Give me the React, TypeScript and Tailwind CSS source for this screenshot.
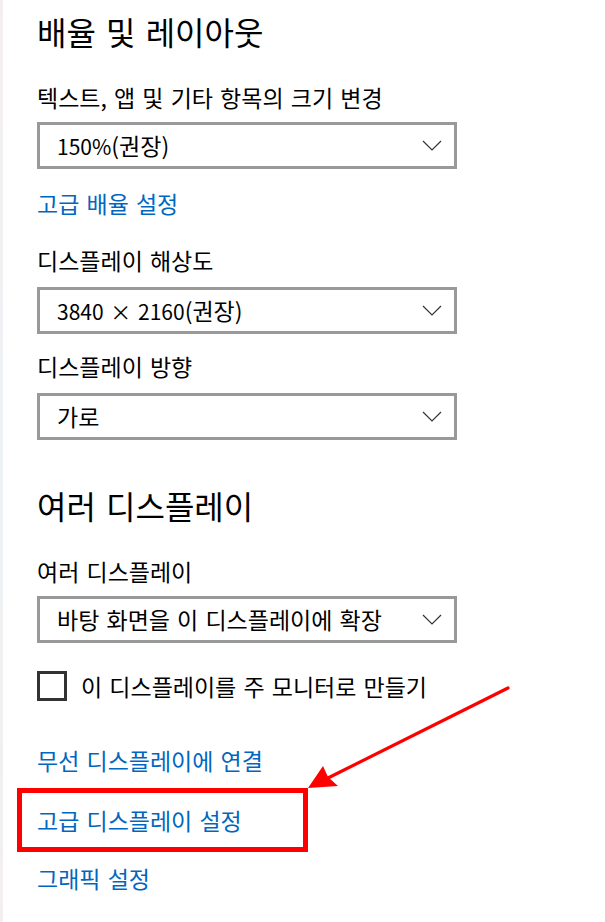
import { ReactNode } from 'react'

const font = { fontFamily: '"Noto Sans CJK KR", "Noto Sans", sans-serif' }

function Dropdown({ children, className = '' }: { children: ReactNode; className?: string }) {
  return (
    <div
      className={`w-[420px] h-[47px] border-[3px] border-[#999999] bg-white flex items-center justify-between pl-[17px] pr-[12px] ${className}`}
    >
      <span className="text-[23px] text-black leading-none [word-spacing:2px]">{children}</span>
      <svg width="20" height="11" viewBox="0 0 20 11" fill="none">
        <path d="M1 1 L10 10 L19 1" stroke="#333333" strokeWidth="1.2" />
      </svg>
    </div>
  )
}

function Label({ children, className = '' }: { children: ReactNode; className?: string }) {
  return (
    <div className={`h-[46px] flex items-center text-[23px] text-black [word-spacing:2px] ${className}`}>
      {children}
    </div>
  )
}

function Link({ children, className = '' }: { children: ReactNode; className?: string }) {
  return (
    <div className={`h-[40px] flex items-center text-[23px] text-[#0067c0] [word-spacing:2px] ${className}`}>
      {children}
    </div>
  )
}

export default function App() {
  return (
    <div className="relative w-[605px] h-[922px] bg-white flex overflow-hidden" style={font}>
      <div className="w-[3px] h-full bg-gradient-to-b from-[#f5eef0] via-[#edf2f5] to-[#f3efee]" />

      <div className="flex flex-col pl-[34px]">
        <div className="h-[62px] flex items-center text-[32px] text-black [word-spacing:3px]">배율 및 레이아웃</div>
        <Label className="mt-[12px]">텍스트, 앱 및 기타 항목의 크기 변경</Label>
        <Dropdown className="mt-[2px]">
          <span className="text-[21px]">150%</span>(권장)
        </Dropdown>
        <Link className="my-[14px]">고급 배율 설정</Link>

        <Label>디스플레이 해상도</Label>
        <Dropdown className="mt-[4px]">
          <span className="text-[21px]">3840 × 2160</span>(권장)
        </Dropdown>

        <Label className="mt-[9px]">디스플레이 방향</Label>
        <Dropdown className="mt-[4px]">가로</Dropdown>

        <div className="mt-[27px] h-[76px] flex items-center text-[32px] text-black [word-spacing:3px]">
          여러 디스플레이
        </div>
        <Label className="mt-[5px]">여러 디스플레이</Label>
        <Dropdown className="mt-[2px]">바탕 화면을 이 디스플레이에 확장</Dropdown>

        <div className="mt-[28px] h-[30px] flex items-center gap-[14px]">
          <div className="w-[30px] h-[30px] border-[3px] border-[#333333] bg-white" />
          <span className="text-[23px] text-black [word-spacing:2px]">이 디스플레이를 주 모니터로 만들기</span>
        </div>

        <Link className="mt-[39px]">무선 디스플레이에 연결</Link>
        <div className="relative mt-[20px]">
          <Link>고급 디스플레이 설정</Link>
          <div className="absolute left-[-20px] top-[-12px] w-[291px] h-[64px] border-[5px] border-[#ff0000]" />
        </div>
        <Link className="mt-[18px]">그래픽 설정</Link>
      </div>

      <svg className="absolute left-0 top-0" width="605" height="922" viewBox="0 0 605 922">
        <line x1="508" y1="688" x2="326" y2="779" stroke="#ff0000" strokeWidth="3.2" strokeLinecap="round" />
        <polygon points="308,788 323,766 328,777 338,786" fill="#ff0000" />
      </svg>
    </div>
  )
}
